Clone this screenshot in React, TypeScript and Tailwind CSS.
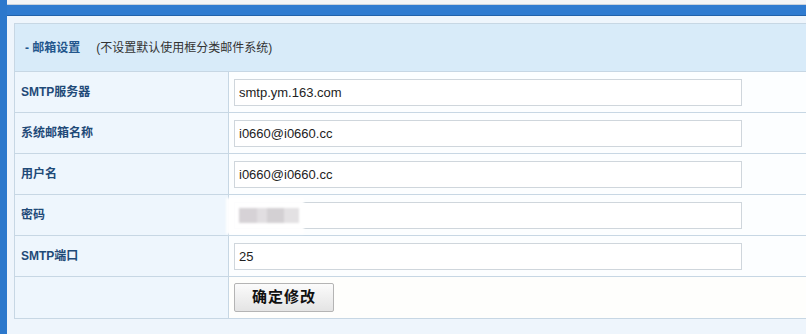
const font = { fontFamily: 'Arial, "Liberation Sans", "Noto Sans CJK SC", sans-serif' };

type Row = { label: string; value?: string; masked?: boolean };

const rows: Row[] = [
  { label: "SMTP服务器", value: "smtp.ym.163.com" },
  { label: "系统邮箱名称", value: "i0660@i0660.cc" },
  { label: "用户名", value: "i0660@i0660.cc" },
  { label: "密码", masked: true },
  { label: "SMTP端口", value: "25" },
];

function Field({ row }: { row: Row }) {
  return (
    <div className="relative">
      <input
        readOnly
        value={row.value ?? ""}
        className="block w-[508px] h-[27px] border border-[#cfd6dc] bg-white px-[4px] text-[13px] text-[#222] outline-none"
        style={font}
      />
      {row.masked && (
        // blurred-out password
        <div className="absolute left-[-8px] top-[-4px] w-[78px] h-[36px] bg-white/95 blur-[1px] flex items-center pl-[13px]">
          <div className="flex h-[15px]">
            <div className="w-[18px] bg-[#d6d2d6]" />
            <div className="w-[10px] bg-[#e1dee1]" />
            <div className="w-[17px] bg-[#d3d0d3]" />
            <div className="w-[15px] bg-[#e3e1e3]" />
          </div>
        </div>
      )}
    </div>
  );
}

export default function App() {
  return (
    <div className="w-[806px] h-[334px] flex overflow-hidden bg-[#eef5fc]" style={font}>
      <div className="w-[7px] shrink-0 bg-[#2c78cc]" />
      <div className="flex-1 flex flex-col min-w-0">
        <div className="h-[5px] bg-[#f3f4f6] border-b border-[#c9d2dc]" />
        <div className="h-[11px] bg-[#2f7bd0] border-b border-[#2262aa]" />
        <div className="flex-1 pl-[7px] pt-[7px] bg-[#eef5fc]">
          <div className="w-[900px] border-t border-l border-[#c7d7e4]">
            {/* section header */}
            <div className="h-[48px] flex items-center bg-[#d8ebf9] border-b border-[#c7d7e4] pl-[10px] text-[12px]">
              <span className="font-bold text-[#23568c]">- 邮箱设置</span>
              <span className="ml-[16px] text-[#333]">(不设置默认使用框分类邮件系统)</span>
            </div>
            {rows.map((row) => (
              <div key={row.label} className="flex h-[41px] border-b border-[#c7d7e4]">
                <div className="w-[214px] shrink-0 flex items-center pl-[6px] pb-[1px] bg-[#eef6fd] border-r border-[#c7d7e4] text-[12px] font-bold text-[#1f4a78]">
                  {row.label}
                </div>
                <div className="flex-1 flex items-center pl-[5px] bg-[#fcfeff]">
                  <Field row={row} />
                </div>
              </div>
            ))}
            <div className="flex h-[42px] border-b border-[#c7d7e4]">
              <div className="w-[214px] shrink-0 bg-[#eef6fd] border-r border-[#c7d7e4]" />
              <div className="flex-1 flex items-center pl-[5px] bg-[#fefefc]">
                <button className="w-[100px] h-[29px] rounded-[2px] border border-[#b4b4b4] bg-gradient-to-b from-[#fbfbfb] to-[#e4e4e4] text-[15px] font-bold text-[#111] tracking-[1px]">
                  确定修改
                </button>
              </div>
            </div>
          </div>
        </div>
      </div>
    </div>
  );
}
